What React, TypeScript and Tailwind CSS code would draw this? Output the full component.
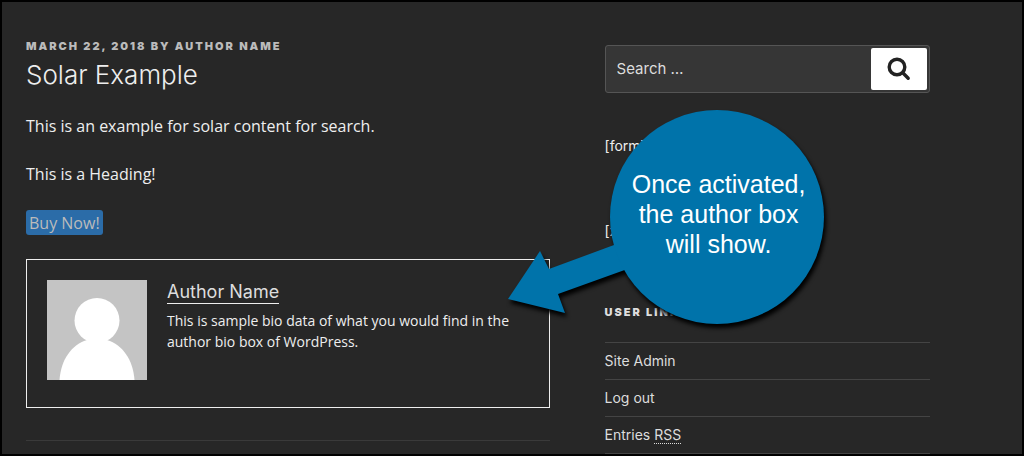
import type React from "react";
import { useState } from "react";

const userLinks = [
  { label: "Site Admin", href: "#admin" },
  { label: "Log out", href: "#logout" },
  { label: "Entries", abbr: "RSS", href: "#entries" },
];

function Avatar() {
  return (
    <svg viewBox="0 0 100 100" className="size-[100px] shrink-0" aria-hidden="true">
      <rect width="100" height="100" fill="#c4c4c4" />
      <circle cx="50" cy="40.5" r="22.5" fill="#fff" />
      <path d="M12.5 100C14 80 24 65 40 60H60C76 65 86 80 87.5 100Z" fill="#fff" />
    </svg>
  );
}

function SearchForm() {
  const [query, setQuery] = useState("");

  const handleSubmit = (e: React.FormEvent) => {
    e.preventDefault();
  };

  return (
    <form
      onSubmit={handleSubmit}
      className="flex h-12 rounded-[3px] border border-[#555] bg-[#363636] p-[2px]">
      <input
        type="search"
        aria-label="Search"
        value={query}
        onChange={(e) => setQuery(e.target.value)}
        placeholder="Search …"
        className="min-w-0 flex-1 bg-transparent px-[9px] pb-[2px] text-[15px] text-white placeholder:text-[#ddd] focus:outline-none"
      />
      <button
        type="submit"
        aria-label="Submit search"
        className="flex w-14 items-center justify-center rounded-[2px] bg-white">
        <svg viewBox="0 0 24 24" className="size-6" fill="none" stroke="#222">
          <circle cx="10" cy="10" r="7.8" strokeWidth="3.4" />
          <path d="M16 16L21.2 21.2" strokeWidth="3.4" strokeLinecap="round" />
        </svg>
      </button>
    </form>
  );
}

// Floating bubble with an arrow that points back at the author box
function Callout() {
  return (
    <div className="absolute top-[105px] -left-[97px] w-[320px]">
      <svg
        viewBox="0 0 320 218"
        className="block w-full overflow-visible drop-shadow-[2px_4px_2px_#000]"
        aria-hidden="true">
        <path d="M0 192L32 144L41 162L125 131L125 160L50 187L57 206Z" fill="#0073aa" />
        <circle cx="209" cy="110" r="107" fill="#0073aa" />
      </svg>
      <p className="absolute top-[62px] left-[104px] w-[214px] text-center font-['Liberation_Sans',Arial,sans-serif] text-[25px] leading-[30px] text-white">
        Once activated,
        <br />
        the author box
        <br />
        will show.
      </p>
    </div>
  );
}

export default function App() {
  return (
    <div className="h-screen overflow-hidden border-2 border-black bg-[#272727] font-[Inter,'Liberation_Sans',sans-serif] text-[#eee]">
      <div className="flex justify-between pr-[92px] pl-6">
        <main className="w-[58%] pt-9">
          <article className="font-['Open_Sans',Arial,sans-serif] text-base leading-6">
            <p className="font-[Inter,sans-serif] text-[11px] leading-4 font-black tracking-[2px] text-[#bbb] uppercase">
              March 22, 2018 by Author Name
            </p>
            <h1 className="mt-1 font-[Inter,sans-serif] text-[26px] leading-[34px] font-light">
              Solar Example
            </h1>
            <p className="mt-[22px]">This is an example for solar content for search.</p>
            <p className="mt-6">This is a Heading!</p>
            <p className="mt-6">
              <a
                href="#buy"
                className="inline-block rounded-[3px] bg-[#2b6ca8] px-[3px] pt-px text-[#bbb]">
                Buy Now!
              </a>
            </p>
          </article>

          <section className="mt-6 flex gap-5 border border-[#eee] px-5 pt-5 pb-[27px]">
            <Avatar />
            <div className="flex flex-col items-start">
              <a href="#author" className="border-b border-[#eee] pt-px text-lg leading-[22px] text-[#ddd]">
                Author Name
              </a>
              <p className="mt-1.5 font-['Open_Sans',Arial,sans-serif] text-[14px] leading-[21px]">
                This is sample bio data of what you would find in the author bio box of WordPress.
              </p>
            </div>
          </section>
          <hr className="mt-8 border-[#3a3a3a]" />
        </main>

        <aside className="relative w-[36%] pt-[43px] text-[14px] leading-[21px]">
          <SearchForm />
          <p className="mt-[42px]">[form]</p>
          <p className="mt-16">[x]</p>
          <h2 className="mt-[63px] text-[11px] leading-4 font-black tracking-[2px] text-[#ddd] uppercase">
            User Links
          </h2>
          <ul className="mt-[22px] border-t border-[#444] text-[#ddd]">
            {userLinks.map((link) => (
              <li key={link.label} className="border-b border-[#444] py-2 leading-5">
                <a href={link.href}>
                  {link.label}
                  {link.abbr && (
                    <>
                      {" "}
                      <abbr
                        title="Really Simple Syndication"
                        className="border-b border-dotted border-[#ddd] no-underline">
                        {link.abbr}
                      </abbr>
                    </>
                  )}
                </a>
              </li>
            ))}
          </ul>
          <Callout />
        </aside>
      </div>
    </div>
  );
}
